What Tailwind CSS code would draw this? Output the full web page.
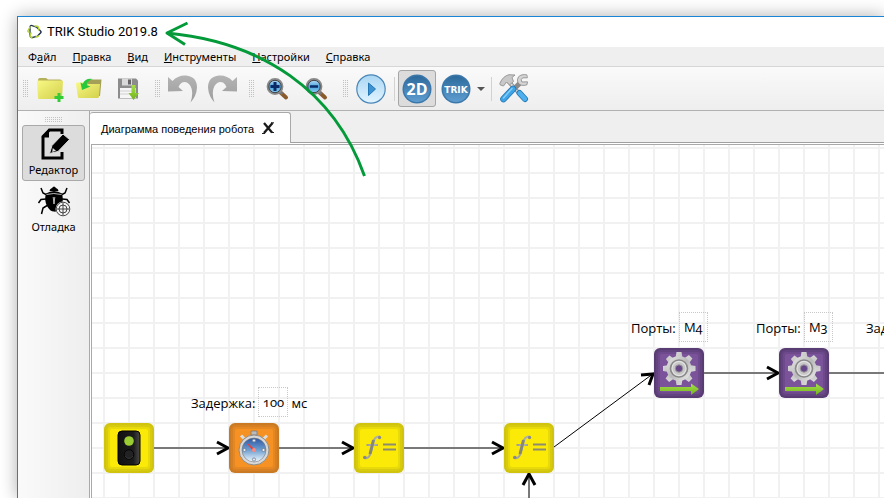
<!DOCTYPE html>
<html lang="ru">
<head>
<meta charset="utf-8">
<title>TRIK Studio 2019.8</title>
<script src="https://cdn.jsdelivr.net/npm/@tailwindcss/browser@4"></script>
</head>
<body class="relative flex h-screen flex-col overflow-hidden bg-white pl-[17px] pt-4 font-['Noto_Sans',sans-serif] text-[11px] text-black">

<!-- Shared gradients and symbols -->
<svg class="absolute size-0" aria-hidden="true">
  <defs>
    <linearGradient id="folder" x1="0" y1="0" x2="1" y2="1"><stop offset="0" stop-color="#f8f884"/><stop offset="1" stop-color="#d3d04c"/></linearGradient>
    <linearGradient id="grey" x1="0" y1="0" x2="0" y2="1"><stop offset="0" stop-color="#b4b4b4"/><stop offset="1" stop-color="#9c9c9c"/></linearGradient>
    <linearGradient id="play" x1="0" y1="0" x2="0" y2="1"><stop offset="0" stop-color="#a9d6f3"/><stop offset="1" stop-color="#e2f5ff"/></linearGradient>
    <linearGradient id="blue" x1="0" y1="0" x2="0" y2="1"><stop offset="0" stop-color="#2d6a9c"/><stop offset="1" stop-color="#5f9dd0"/></linearGradient>
    <linearGradient id="lens" x1="0" y1="0" x2="0" y2="1"><stop offset="0" stop-color="#c5e5fb"/><stop offset=".5" stop-color="#4ba3dc"/><stop offset="1" stop-color="#8fd0f5"/></linearGradient>
    <linearGradient id="metal" x1="0" y1="0" x2="1" y2="1"><stop offset="0" stop-color="#e8e8e8"/><stop offset=".5" stop-color="#b9b9b9"/><stop offset="1" stop-color="#efefef"/></linearGradient>
    <linearGradient id="lime" x1="0" y1="0" x2="0" y2="1"><stop offset="0" stop-color="#a6e04a"/><stop offset="1" stop-color="#72b21c"/></linearGradient>
    <linearGradient id="dial" x1="0" y1="0" x2="0" y2="1"><stop offset="0" stop-color="#2d55a4"/><stop offset=".5" stop-color="#6f9fd0"/><stop offset="1" stop-color="#f3faff"/></linearGradient>
    <linearGradient id="fgrad" x1="0" y1="0" x2="1" y2="1"><stop offset="0" stop-color="#777"/><stop offset=".45" stop-color="#b9b9b0"/><stop offset="1" stop-color="#6a6a6a"/></linearGradient>
    <linearGradient id="lamp" x1="0" y1="0" x2="1" y2="0"><stop offset="0" stop-color="#111"/><stop offset=".7" stop-color="#1c1c1c"/><stop offset="1" stop-color="#4a4a4a"/></linearGradient>
    <pattern id="dots" width="2" height="2" patternUnits="userSpaceOnUse"><rect width="1" height="1" fill="#c2c2c2"/></pattern>
    <symbol id="fn" viewBox="0 0 50 50">
      <rect width="50" height="50" rx="6" fill="#d0c40f"/><rect x="2" y="2" width="46" height="46" rx="5" fill="#d8cb0e"/><rect x="4" y="4" width="42" height="42" rx="3" fill="#e8d90b"/><rect x="6" y="6" width="38" height="38" rx="2" fill="#fbe908"/>
      <path d="M26 14.500c-1.500-1.500-4.500-.8-5.900 2.500-1.600 3.800-2 8.500-3.700 13.500-1.100 3.300-3.200 5-5.400 4.500M12.500 22h11.500" fill="none" stroke="url(#fgrad)" stroke-width="2.200"/><path d="M19.500 17l-3.500 14" stroke="#85857c" stroke-width="3"/><circle cx="25.500" cy="14.500" r="1.700" fill="#888"/><circle cx="10.800" cy="34.500" r="1.800" fill="#888"/>
      <path d="M29 21.500h13M29 26.500h13" stroke="#8d8b6e" stroke-width="2"/>
    </symbol>
    <symbol id="motor" viewBox="0 0 50 50">
      <rect width="50" height="50" rx="6" fill="#5a3c75"/><rect x="2" y="2" width="46" height="46" rx="5" fill="#63437f"/><rect x="4" y="4" width="42" height="42" rx="3" fill="#6e4a8d"/><rect x="6" y="6" width="38" height="38" rx="2" fill="#7a539b"/>
      <g fill="url(#metal)"><path d="M22.500 4h5l1 6h-7zM22.500 37h5l1-6h-7zM9 18v5l6 1v-7zM41.500 18v5l-6 1v-7z"/><path d="M22.500 4h5l1 6h-7zM22.500 37h5l1-6h-7zM9 18v5l6 1v-7zM41.500 18v5l-6 1v-7z" transform="rotate(45 25 20.500)"/><circle cx="25" cy="20.500" r="12.500"/></g>
      <circle cx="25" cy="20.500" r="8.500" fill="#e4e4e4" stroke="#888" stroke-width="1.600"/><circle cx="25" cy="20.500" r="6.500" fill="#c8c8c8"/><circle cx="25" cy="20.500" r="3.700" fill="#67468a" stroke="#999"/>
      <path d="M6 39h31v-3.500l8 5.500-8 6v-4H6z" fill="url(#lime)"/>
    </symbol>
  </defs>
</svg>

<div class="flex min-h-0 flex-1 flex-col border-l border-t border-[#1c84d4] bg-[#efefef] shadow-[0_0_16px_rgba(0,0,0,0.32)]">

  <!-- Title bar -->
  <header class="flex h-[30px] shrink-0 items-center gap-[5px] bg-white pl-[9px]">
    <svg class="h-4 w-[15px]" viewBox="0 0 15 16" fill="none" stroke-linejoin="round" stroke-linecap="round"><path d="M3 5.500V3q0-2 2-1.400L9 3" stroke="#20324f" stroke-width="1.200"/><path d="M9 2.500l4.500 4.500q1 1 0 2L10 12.500" stroke="#20324f" stroke-width="1.500"/><path d="M9 12.500l-3.500 1Q3 14 3 11V6" stroke="#33475f" stroke-width="1.400"/><path d="M3 3L1 6.500Q.5 8 2 8M4 9l-1 3 2 2M8 2l3 .5L12 6M9 13l2.500-1" stroke="#b4d334" stroke-width="1.400"/></svg>
    <h1 class="font-['Roboto',sans-serif] text-[13px] leading-4">TRIK Studio 2019.8</h1>
  </header>

  <!-- Menu -->
  <nav class="flex h-5 shrink-0 items-center gap-4 border-b border-[#d6d6d6] pl-[10px] leading-4">
    <a href="#">Ф<u>а</u>йл</a>
    <a href="#"><u>П</u>равка</a>
    <a href="#"><u>В</u>ид</a>
    <a href="#"><u>И</u>нструменты</a>
    <a href="#"><u>Н</u>астройки</a>
    <a href="#"><u>С</u>правка</a>
  </nav>

  <!-- Toolbar -->
  <div role="toolbar" class="flex h-11 shrink-0 items-center border-b border-[#b1b1b1] bg-linear-to-b from-[#fafafa] to-[#eeeeee]">
    <div class="flex w-[13px] pl-[5px]"><svg class="h-[17px] w-[5px]"><rect width="5" height="17" fill="url(#dots)"/></svg></div>
    <div class="flex gap-px">
      <button aria-label="Создать" class="flex h-[37px] w-[38px] items-center justify-center"><svg class="size-[30px]" viewBox="0 0 30 30"><path d="M3 6q0-2 2-2h6l2 1.500h12q2 0 2 2V10H3z" fill="#b5b05a"/><path d="M2 7.500q0-1 1-1h24q1 0 1 1L27 24q0 1-1 1H4q-1 0-1-1z" fill="url(#folder)"/><path d="M24 19v9M19.500 23.500h9" stroke="#34cb34" stroke-width="3"/></svg></button>
      <button aria-label="Открыть" class="flex h-[37px] w-[38px] items-center justify-center"><svg class="size-[30px]" viewBox="0 0 30 30"><path d="M14 5.500h13.500L26 22H12z" fill="#a5a058"/><path d="M2 10q0-1.500 1.500-1.500H11L13 10h13l-1 12.500q-.2 1.500-1.500 1.500H5q-1 0-1.200-1.500z" fill="url(#folder)"/><path d="M8 16L6.500 8.500l2.300 1.300Q11.500 3.500 19 5q-5.500 1-5.800 6.200l3.300 1.300z" fill="#27c83c"/></svg></button>
      <button aria-label="Сохранить" class="flex h-[37px] w-[38px] items-center justify-center"><svg class="size-[30px]" viewBox="0 0 30 30"><path d="M5 4.500h18l2 2v18H5z" fill="#8c8c8c"/><path d="M9 4.500h10v7H9z" fill="#d9d9d9"/><path d="M15 5.500h3v5h-3z" fill="#666"/><path d="M7 14h16v10H7z" fill="#f6f6f6"/><path d="M7 17h16M7 20h16" stroke="#d0d0d0"/><path d="M18.500 11h4v8h3.500L20.500 26l-5-7h3z" fill="url(#lime)"/></svg></button>
    </div>
    <div class="flex w-[17px] pl-2"><svg class="h-[17px] w-[5px]"><rect width="5" height="17" fill="url(#dots)"/></svg></div>
    <div class="flex gap-px">
      <button aria-label="Отменить" class="flex h-[37px] w-[38px] items-center justify-center"><svg class="size-[30px]" viewBox="0 0 30 30"><path d="M0 3l4.500 4Q10 1 18 1.500 29 2.500 29 13.500 28.500 22 22.500 28.500 26 18 22.500 12 19 6.500 14 8.500 11.500 10 10.500 13l4.500 4-15 .5z" fill="url(#grey)"/></svg></button>
      <button aria-label="Повторить" class="flex h-[37px] w-[38px] items-center justify-center"><svg class="size-[30px]" viewBox="0 0 30 30"><path d="M30 3l-4.500 4Q20 1 12 1.500 1 2.500 1 13.500 1.500 22 7.500 28.500 4 18 7.500 12 11 6.500 16 8.500q2.500 1.500 3.500 4.500L15 17l15 .5z" fill="url(#grey)"/></svg></button>
    </div>
    <div class="flex w-[17px] pl-2"><svg class="h-[17px] w-[5px]"><rect width="5" height="17" fill="url(#dots)"/></svg></div>
    <div class="flex gap-px">
      <button aria-label="Увеличить" class="flex h-[37px] w-[38px] items-center justify-center"><svg class="size-[30px]" viewBox="0 0 30 30"><path d="M18 18l6 5.500" stroke="#8b5a2b" stroke-width="4" stroke-linecap="round"/><path d="M17 17l3.500 3" stroke="#777" stroke-width="3"/><circle cx="13" cy="12.500" r="7.300" fill="url(#lens)" stroke="#8a8a8a" stroke-width="2.200"/><circle cx="13" cy="12.500" r="6.200" fill="none" stroke="#444"/><path d="M13 8v9M8.500 12.500h9" stroke="#0b2c66" stroke-width="3"/></svg></button>
      <button aria-label="Уменьшить" class="flex h-[37px] w-[38px] items-center justify-center"><svg class="size-[30px]" viewBox="0 0 30 30"><path d="M18 18l6 5.500" stroke="#8b5a2b" stroke-width="4" stroke-linecap="round"/><path d="M17 17l3.500 3" stroke="#777" stroke-width="3"/><circle cx="13" cy="12.500" r="7.300" fill="url(#lens)" stroke="#8a8a8a" stroke-width="2.200"/><circle cx="13" cy="12.500" r="6.200" fill="none" stroke="#444"/><path d="M9 12.500h8" stroke="#0b2c66" stroke-width="2.500"/></svg></button>
    </div>
    <div class="flex w-[17px] pl-2"><svg class="h-[17px] w-[5px]"><rect width="5" height="17" fill="url(#dots)"/></svg></div>
    <button aria-label="Запустить" class="flex h-[37px] w-[38px] items-center justify-center"><svg class="size-[30px]" viewBox="0 0 30 30"><circle cx="15" cy="15" r="14.200" fill="url(#play)" stroke="#4a86b8" stroke-width="1.200"/><path d="M12.500 9l7 6-7 6.500z" fill="#3c93d3" stroke="#2477b5"/></svg></button>
    <div class="flex w-2 justify-center"><span class="h-6 w-px bg-[#d2d2d2]"></span></div>
    <div class="flex gap-px">
      <button aria-label="2D модель" aria-pressed="true" class="flex h-[37px] w-[38px] items-center justify-center rounded-[3px] border border-[#a5a5a5] bg-[#dcdcdc]"><svg class="size-[30px] shrink-0" viewBox="0 0 30 30"><circle cx="15" cy="15" r="14.500" fill="#3c77aa"/><circle cx="15" cy="15" r="13" fill="url(#blue)"/><text x="15" y="20.500" text-anchor="middle" font-family="Open Sans, sans-serif" font-weight="700" font-size="16" fill="#fff">2D</text></svg></button>
      <button aria-label="TRIK" class="flex h-[37px] w-[38px] items-center justify-center"><svg class="size-[30px] shrink-0" viewBox="0 0 30 30"><circle cx="15" cy="15" r="14.500" fill="#3c77aa"/><circle cx="15" cy="15" r="13" fill="url(#blue)"/><text x="15" y="18.500" text-anchor="middle" font-family="DejaVu Sans, sans-serif" font-weight="700" font-size="9" fill="#fff">TRIK</text></svg></button>
    </div>
    <button aria-label="Выбор робота" class="flex h-[37px] w-3 items-center justify-center"><svg class="h-1 w-2" viewBox="0 0 8 4"><path d="M0 0h8L4 4z" fill="#555"/></svg></button>
    <div class="flex w-2 justify-center"><span class="h-6 w-px bg-[#d2d2d2]"></span></div>
    <button aria-label="Настройки" class="flex h-[37px] w-[38px] items-center justify-center"><svg class="size-[30px]" viewBox="0 0 30 30" stroke-linecap="round"><path d="M10 8l9 10" stroke="#8a8a8a" stroke-width="4"/><path d="M10 8l9 10" stroke="#ddd" stroke-width="2"/><path d="M1 9Q4 2 10 .7l6 .3-3 2.500 1.500 4-4 3.500-3-3-3 4-3-1z" fill="#c8c8c8" stroke="#888" stroke-width=".8"/><path d="M16 14l5-5" stroke="#8a8a8a" stroke-width="5"/><path d="M27.500.8q-5-1-8 2-2 3-.5 6 3 4 9 2l.5-3-5.500.2-1-2.500 2-1.700h4z" fill="#d4d4d4" stroke="#888" stroke-width=".8"/><path d="M14 15l-9.500 10" stroke="#2577b4" stroke-width="6.600"/><path d="M14 15l-9.500 10" stroke="#3fa4e6" stroke-width="5"/><path d="M13 14.500L4.500 24" stroke="#83cdf8" stroke-width="1.500"/><path d="M20.500 19l5.500 6" stroke="#2577b4" stroke-width="6"/><path d="M20.500 19l5.500 6" stroke="#4cb0ee" stroke-width="4.400"/></svg></button>
  </div>

  <main class="flex min-h-0 flex-1">

    <!-- Mode switcher -->
    <aside class="flex w-[71px] shrink-0 flex-col bg-linear-to-r from-[#fafafa] to-[#eeeeee] px-1">
      <div class="flex h-[14px] items-center justify-center pt-0.5"><svg class="h-[5px] w-[17px]"><rect width="17" height="5" fill="url(#dots)"/></svg></div>
      <div class="flex flex-col gap-px">
      <button class="flex h-14 flex-col items-center gap-0.5 rounded-[3px] border border-[#a9a9a9] bg-[#dcdcdc]"><svg class="size-[34px] shrink-0" viewBox="0 0 34 34"><path d="M25 8V4H12.500L6 10.500V32h19V26" fill="none" stroke="#000" stroke-width="3"/><path d="M4.500 11.500L12 2.500v9z"/><path d="M12.500 27.500l2.500-8L26 8l6.500 5.500-11.500 12z" stroke="#dcdcdc"/><path d="M15.800 22l3.200 2.700-3.800 1.300z" fill="#dcdcdc"/></svg><span class="leading-4">Редактор</span></button>
      <button class="flex h-14 flex-col items-center gap-0.5 border border-transparent"><svg class="size-[34px] shrink-0" viewBox="0 0 34 34"><g fill="none" stroke="#000" stroke-width="1.500"><path d="M10 12L6 10 4 5M9 16l-5 .5L1.500 20M11 22l-5 3-1.500 6M24 12l4-2 2-5M25 16l5 .5 2.500 3.500"/></g><path d="M12.500 8q0-2 2.500-3 2-3 4 0 2.500 1 2.500 3z"/><path d="M9 10.500q8-5 16 0 2 8-1 13-3.500 6-7 5-4 0-7-5.500Q7 17 9 10.500z"/><path d="M9.500 11.500q7-2 15 0M16.200 14l.8 7 .8-7" fill="none" stroke="#e4e4e4" stroke-width=".8"/><circle cx="26" cy="26" r="7.500" fill="#f2f2f2"/><g fill="none" stroke="#333" stroke-width=".9"><circle cx="26" cy="26" r="6.800"/><circle cx="26" cy="26" r="4"/><path d="M26 20v12M20 26h12"/></g></svg><span class="leading-4">Отладка</span></button>
      </div>
    </aside>

    <section class="flex min-w-0 flex-1 flex-col border-l border-[#a9a9a9]">
      <div role="tablist" class="flex h-[31px] shrink-0 pt-px">
        <div class="z-10 -mb-px flex items-center gap-2 rounded-t-[3px] border-r border-t border-[#a9a9a9] bg-white pl-[11px] pr-4">
          <button role="tab" aria-selected="true" class="whitespace-nowrap pt-0.5 font-['Liberation_Sans',sans-serif]">Диаграмма поведения робота</button>
          <button aria-label="Закрыть"><svg class="size-3" viewBox="0 0 12 12"><path d="M2 1l8 9.500M10.500 1L2 11" stroke="#1a1a1a" stroke-width="2.300"/><path d="M0 11.500h3M9 10.500h3M9 .8h3" stroke="#222"/></svg></button>
        </div>
      </div>
      <div class="flex min-h-0 flex-1 border-t border-[#a0a0a0] bg-white pl-px pt-px">
        <!-- Diagram canvas -->
        <div class="relative flex-1 overflow-hidden border-l border-t border-[#a9a9a9] bg-white font-['Open_Sans','Noto_Sans',sans-serif] text-[13px] leading-5 oldstyle-nums">
          <svg class="absolute inset-0 size-full">
            <defs>
              <pattern id="grid" x="11" y="2" width="25" height="25" patternUnits="userSpaceOnUse"><path d="M0 1h25M1 0v25" stroke="#000" stroke-opacity=".055" stroke-width="2"/></pattern>
            </defs>
            <rect width="100%" height="100%" fill="url(#grid)"/>
            <g fill="none" stroke="#000">
              <path d="M62 303h75M187 303h75M312 303h100M437 328v400M612 228h75M737 228h400M462 302l100-74"/>
              <g stroke-width="3"><path d="M125 297l11 6-11 6M250 297l11 6-11 6M400 297l11 6-11 6M675 222l11 6-11 6M431 340l6-11 6 11M549 230l12-1-4 11"/></g>
            </g>
          </svg>

          <svg class="absolute left-3 top-[278px] size-[50px]" viewBox="0 0 50 50"><rect width="50" height="50" rx="6" fill="#d0c40f"/><rect x="2" y="2" width="46" height="46" rx="5" fill="#d8cb0e"/><rect x="4" y="4" width="42" height="42" rx="3" fill="#e8d90b"/><rect x="6" y="6" width="38" height="38" rx="2" fill="#fbe908"/><rect x="14" y="8" width="22" height="34" rx="4" fill="url(#lamp)" stroke="#000"/><circle cx="25" cy="18" r="4.800" fill="#9acd32"/><circle cx="25" cy="31.500" r="4.800" fill="#222" stroke="#050505"/><path d="M21 33a4.500 4.500 0 0 0 8 0" fill="none" stroke="#333"/></svg>

          <svg class="absolute left-[137px] top-[278px] size-[50px]" viewBox="0 0 50 50"><rect width="50" height="50" rx="6" fill="#c97a22"/><rect x="2" y="2" width="46" height="46" rx="5" fill="#d68023"/><rect x="4" y="4" width="42" height="42" rx="3" fill="#e58823"/><rect x="6" y="6" width="38" height="38" rx="2" fill="#f59223"/><path d="M22 8h6v4h-6z" fill="#bbb" stroke="#777" stroke-width=".7"/><path d="M12 12.500l3 3M38 12.500l-3 3" stroke="#ddd" stroke-width="3"/><circle cx="25" cy="27" r="15" fill="#d8d8d8" stroke="#8d8d8d"/><circle cx="25" cy="27" r="12" fill="url(#dial)" stroke="#777" stroke-width=".6"/><g fill="#e7edf5" stroke="#6c7a8d" stroke-width=".8"><circle cx="25" cy="17.500" r="1.600"/><circle cx="15.500" cy="27" r="1.600"/><circle cx="34.500" cy="27" r="1.600"/><circle cx="25" cy="36.500" r="1.600"/></g><path d="M18.500 20.500l8 7-1.500 1z" fill="#ef3b32" stroke="#ef3b32"/><circle cx="25" cy="27" r="2" fill="#f68d86"/></svg>

          <svg class="absolute left-[262px] top-[278px] size-[50px]"><use href="#fn"/></svg>
          <svg class="absolute left-[412px] top-[278px] size-[50px]"><use href="#fn"/></svg>
          <svg class="absolute left-[562px] top-[203px] size-[50px]"><use href="#motor"/></svg>
          <svg class="absolute left-[687px] top-[203px] size-[50px]"><use href="#motor"/></svg>

          <div class="absolute left-[99px] top-[242px] flex items-center gap-[3px] whitespace-nowrap"><label for="delay" class="pt-0.5">Задержка:</label><input id="delay" value="100" class="h-[30px] w-[30px] border border-dotted border-[#c8c8c8] text-center"><span class="pt-0.5">мс</span></div>
          <div class="absolute left-[539px] top-[167px] flex items-center gap-[3px] whitespace-nowrap"><label for="port4" class="pt-0.5">Порты:</label><input id="port4" value="M4" class="h-[30px] w-[29px] border border-dotted border-[#c8c8c8] text-center"></div>
          <div class="absolute left-[664px] top-[167px] flex items-center gap-[3px] whitespace-nowrap"><label for="port3" class="pt-0.5">Порты:</label><input id="port3" value="M3" class="h-[30px] w-[29px] border border-dotted border-[#c8c8c8] text-center"></div>
          <div class="absolute left-[774px] top-[167px] flex h-[30px] items-center whitespace-nowrap"><span class="pt-0.5">Задержка:</span></div>
        </div>
      </div>
    </section>
  </main>
</div>

<!-- Annotation arrow pointing at the version number -->
<svg class="pointer-events-none absolute left-0 top-0 z-20 h-48 w-96" viewBox="0 0 384 192" fill="none" stroke="#049a3a" stroke-width="3" aria-hidden="true"><path d="M364.500 176C334 90 262 42 167 33"/><path d="M187.500 23L167 33l18 11.500" stroke-linejoin="round"/></svg>
</body>
</html>
